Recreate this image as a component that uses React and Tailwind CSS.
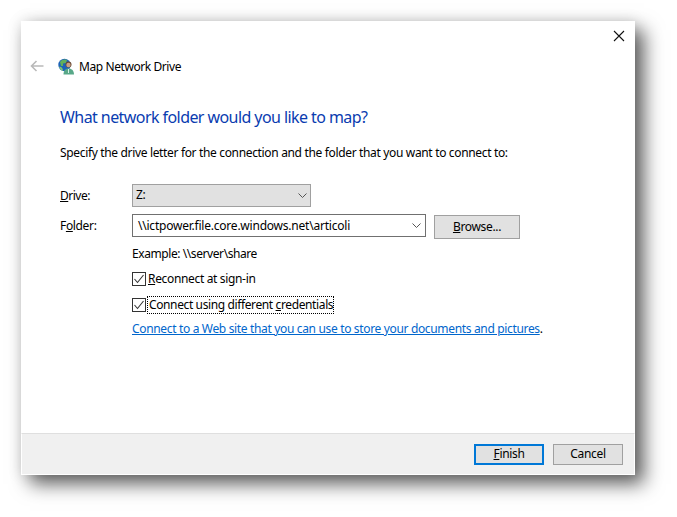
import React from "react";

function Chevron() {
  return (
    <svg width="9" height="6" viewBox="0 0 9 6">
      <path d="M0.5 0.5 L4.5 4.5 L8.5 0.5" fill="none" stroke="#555" strokeWidth="1" />
    </svg>
  );
}

function Check() {
  return (
    <span className="w-[14px] h-[14px] border border-[#333] bg-white flex items-center justify-center shrink-0">
      <svg width="12" height="12" viewBox="0 0 12 12">
        <path d="M1.5 6 L4.5 9.5 L10.5 2" fill="none" stroke="#333" strokeWidth="1.1" />
      </svg>
    </span>
  );
}

function Globe() {
  return (
    <svg width="17" height="17" viewBox="0 0 17 17">
      <circle cx="6.5" cy="7" r="6.2" fill="#1d63b8" />
      <path d="M2 4 C4 1.5 7 1 9 2 L8 5 L5 5.5 L5 8 L3 8 Z" fill="#62b05a" />
      <path d="M1 9 C3 8 5 10 5 13 L3 12 Z" fill="#7fc46e" />
      <circle cx="10.5" cy="6.5" r="3" fill="#6b4a35" />
      <circle cx="10.5" cy="7" r="2.2" fill="#c9a184" />
      <path d="M5.5 16.5 C5.5 12 8 10.5 10.5 10.5 C13 10.5 16 12 16 16.5 Z" fill="#58a888" />
      <path d="M10 11 L11 11 L11 15 L10 15 Z" fill="#d6efe4" />
    </svg>
  );
}

export default function App() {
  return (
    <div className="w-[677px] h-[517px] bg-white pl-[21px] pt-[21px] overflow-hidden text-[12px] text-black tracking-[-0.34px] font-['Noto_Sans',sans-serif]">
      <div className="w-[614px] h-[454px] bg-white flex flex-col shadow-[9px_9px_18px_rgba(0,0,0,0.62),0_0_14px_rgba(0,0,0,0.12)]">
        <div className="flex justify-end pr-[10px] pt-[9px] h-[30px]">
          <svg width="12" height="12" viewBox="0 0 12 12">
            <path d="M1 1 L11 11 M11 1 L1 11" stroke="#111" strokeWidth="1.1" fill="none" />
          </svg>
        </div>
        <div className="flex items-center h-[30px] pl-[9px]">
          <svg width="14" height="12" viewBox="0 0 14 12">
            <path d="M6.5 1 L1.5 6 L6.5 11 M1.5 6 L13.5 6" stroke="#b9b9b9" strokeWidth="1.6" fill="none" />
          </svg>
          <span className="ml-[14px]"><Globe /></span>
          <span className="ml-[4px] mt-[2px] tracking-[-0.42px]">Map Network Drive</span>
        </div>
        <div className="flex-1 pl-[39px]">
          <h1 className="mt-[24px] h-[24px] leading-[24px] text-[16px] font-normal text-[#0a3cb0] tracking-[-0.57px]">What network folder would you like to map?</h1>
          <p className="mt-[16px] h-[16px] leading-[16px]">Specify the drive letter for the connection and the folder that you want to connect to:</p>
          <div className="mt-[23px] flex items-center h-[23px]">
            <span className="w-[72px] tracking-[-0.5px]"><u>D</u>rive:</span>
            <div className="w-[179px] h-[23px] border border-[#a0a0a0] bg-[#e1e1e1] flex items-center justify-between pl-[3px] pr-[3px]">
              <span className="-mt-[2px]">Z:</span>
              <Chevron />
            </div>
          </div>
          <div className="mt-[7px] flex items-start h-[25px]">
            <span className="w-[72px] mt-[3px]">F<u>o</u>lder:</span>
            <div className="w-[294px] h-[23px] border border-[#707070] bg-white flex items-center justify-between pl-[5px] pr-[4px]">
              <span className="tracking-[-0.22px]">\\ictpower.file.core.windows.net\articoli</span>
              <Chevron />
            </div>
            <div className="ml-[8px] mt-[1px] w-[86px] h-[24px] border border-[#a0a0a0] bg-[#e1e1e1] flex items-center justify-center">
              <span><u>B</u>rowse...</span>
            </div>
          </div>
          <div className="ml-[72px]">
            <div className="mt-[7px] h-[16px] leading-[16px] tracking-[-0.42px]">Example: \\server\share</div>
            <div className="mt-[9px] flex items-center h-[16px]">
              <Check />
              <span className="ml-[2px]"><u>R</u>econnect at sign-in</span>
            </div>
            <div className="mt-[9px] flex items-center h-[18px]">
              <Check />
              <span className="ml-[1px] h-[18px] leading-[16px] px-[1px] border border-dotted border-black w-[187px] whitespace-nowrap tracking-[-0.38px]">Connect using different <u>c</u>redentials</span>
            </div>
            <div className="mt-[7px] h-[16px] leading-[16px]">
              <span className="text-[#0066cc] underline">Connect to a Web site that you can use to store your documents and pictures</span>.
            </div>
          </div>
        </div>
        <div className="h-[42px] border-t border-[#dfdfdf] border-b border-b-white border-x border-x-white bg-[#f0f0f0] flex items-center justify-end gap-[9px] pr-[11px]">
          <div className="w-[70px] h-[21px] border-2 border-[#0078d7] bg-[#e1e1e1] flex items-center justify-center"><span><u>F</u>inish</span></div>
          <div className="w-[70px] h-[21px] border border-[#a0a0a0] bg-[#e1e1e1] flex items-center justify-center"><span>Cancel</span></div>
        </div>
      </div>
    </div>
  );
}
